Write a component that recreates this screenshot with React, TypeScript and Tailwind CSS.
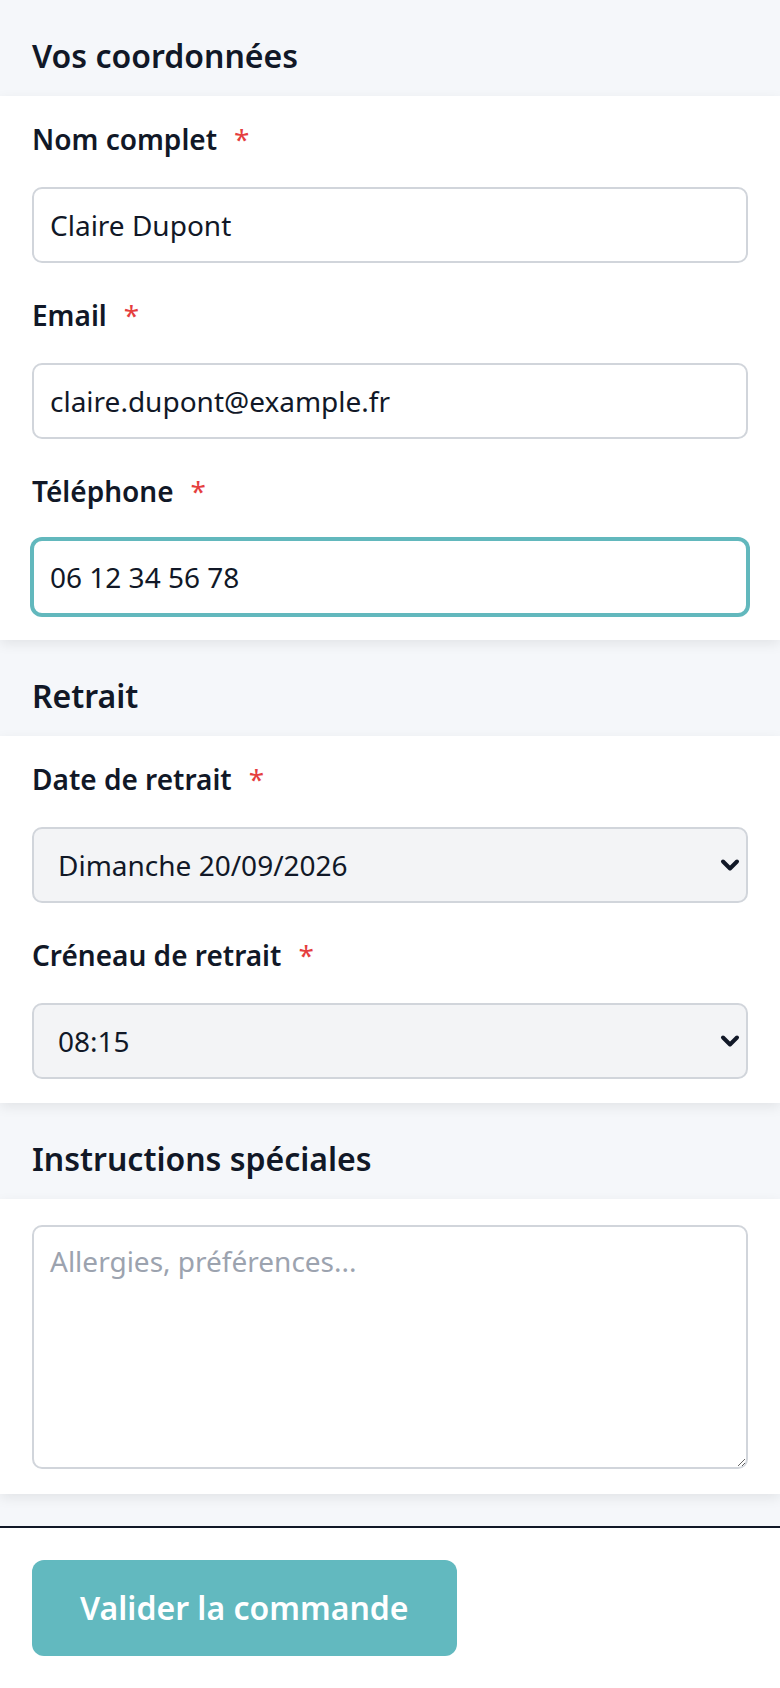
import * as React from 'react';

const font = { fontFamily: '"Noto Sans", "Open Sans", sans-serif' };

function SectionTitle({ children }: { children: React.ReactNode }) {
  return (
    <h2 className="px-[32px] pt-[32px] pb-[16px] text-[32px] leading-[48px] font-semibold text-[#111827]">
      {children}
    </h2>
  );
}

function Label({ children }: { children: React.ReactNode }) {
  return (
    <label className="mb-[29px] block text-[28px] leading-[38px] font-semibold text-[#111827]">
      {children}
      <span className="ml-[17px] font-normal text-[#e53e3e]">*</span>
    </label>
  );
}

function Chevron() {
  return (
    <svg
      className="pointer-events-none absolute right-[8px] top-1/2 -translate-y-1/2"
      width="20"
      height="14"
      viewBox="0 0 20 14"
      fill="none"
    >
      <path d="M3 3.5 L10 10.5 L17 3.5" stroke="#111827" strokeWidth="4" strokeLinecap="round" strokeLinejoin="round" />
    </svg>
  );
}

function Select({ value, options }: { value: string; options: string[] }) {
  return (
    <div className="relative">
      <select
        defaultValue={value}
        className="block h-[76px] w-full appearance-none rounded-[10px] border-2 border-[#d1d5db] bg-[#f3f4f6] pl-[24px] pr-[40px] text-[28px] leading-[38px] text-[#111827] outline-none"
        style={font}
      >
        {options.map(o => (
          <option key={o}>{o}</option>
        ))}
      </select>
      <Chevron />
    </div>
  );
}

export default function App() {
  const inputCls =
    'block h-[76px] w-full rounded-[10px] border-2 border-[#d1d5db] bg-white px-[16px] text-[28px] leading-[38px] text-[#111827] outline-none';

  return (
    <div className="flex min-h-screen w-full flex-col bg-[#f5f7fa]" style={font}>
      <section>
        <SectionTitle>Vos coordonnées</SectionTitle>
        <div className="flex flex-col gap-[33px] bg-white px-[32px] pt-[24px] pb-[25px] shadow-[0_4px_12px_rgba(0,0,0,0.08)]">
          <div>
            <Label>Nom complet</Label>
            <input className={inputCls} style={font} defaultValue="Claire Dupont" />
          </div>
          <div>
            <Label>Email</Label>
            <input className={inputCls} style={font} defaultValue="claire.dupont@example.fr" />
          </div>
          <div>
            <Label>Téléphone</Label>
            <input
              className="block h-[76px] w-full rounded-[10px] border-2 border-[#62b8bd] bg-white px-[16px] text-[28px] leading-[38px] text-[#111827] shadow-[0_0_0_2px_#62b8bd] outline-none"
              style={font}
              defaultValue="06 12 34 56 78"
            />
          </div>
        </div>
      </section>

      <section>
        <SectionTitle>Retrait</SectionTitle>
        <div className="flex flex-col gap-[33px] bg-white px-[32px] pt-[24px] pb-[24px] shadow-[0_4px_12px_rgba(0,0,0,0.08)]">
          <div>
            <Label>Date de retrait</Label>
            <Select value="Dimanche 20/09/2026" options={['Dimanche 20/09/2026', 'Lundi 21/09/2026']} />
          </div>
          <div>
            <Label>Créneau de retrait</Label>
            <Select value="08:15" options={['08:00', '08:15', '08:30']} />
          </div>
        </div>
      </section>

      <section>
        <SectionTitle>Instructions spéciales</SectionTitle>
        <div className="bg-white px-[32px] pt-[26px] pb-[25px] shadow-[0_4px_12px_rgba(0,0,0,0.08)]">
          <textarea
            className="block h-[244px] w-full rounded-[10px] border-2 border-[#d1d5db] bg-white px-[16px] py-[14px] text-[28px] leading-[40px] text-[#111827] outline-none placeholder:text-[#9ca3af]"
            style={font}
            placeholder="Allergies, préférences..."
          />
        </div>
      </section>

      <footer className="mt-[32px] flex-1 border-t-2 border-[#111827] bg-white px-[32px] pt-[32px] pb-[32px]">
        <button className="h-[96px] rounded-[12px] bg-[#62b9bf] px-[48px] text-[32px] leading-[48px] font-semibold text-white">
          Valider la commande
        </button>
      </footer>
    </div>
  );
}
